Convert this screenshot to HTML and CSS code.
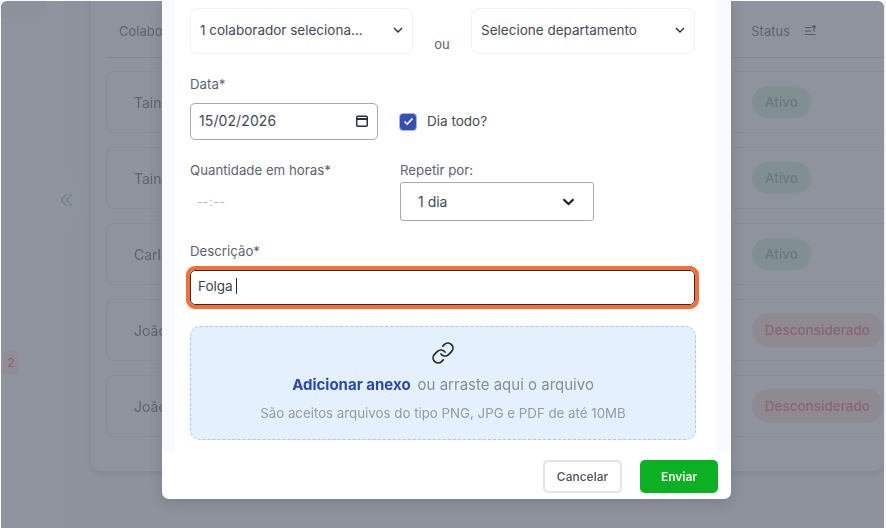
FILE: index.html
```html
<!DOCTYPE html>
<html lang="pt-BR">
<head>
    <meta charset="UTF-8">
    <meta name="viewport" content="width=device-width, initial-scale=1.0">
    <title>Nova folga</title>
    <link rel="stylesheet" href="styles.css">
</head>
<body>
    <div class="screen">
        <aside class="sidebar">
            <div class="sidebar-pill"></div>
            <div class="sidebar-badge">2</div>
            <svg class="sidebar-handle" width="20" height="100" viewBox="0 0 20 100">
                <path d="M0 0 C2 12 19 26 19 50 C19 74 2 88 0 100 Z" fill="#fbfcfd"/>
            </svg>
            <svg class="sidebar-chevrons" width="13" height="14" viewBox="0 0 13 14" fill="none" stroke="#8fd0b2" stroke-width="1">
                <path d="M6.5 1 L1 7 L6.5 13"/>
                <path d="M12 1 L6.5 7 L12 13"/>
            </svg>
        </aside>
        <main class="content">
            <section class="table-card">
                <div class="table-head">
                    <span class="head-name">Colaborador</span>
                    <span class="head-status">
                        Status
                        <svg width="14" height="14" viewBox="0 0 14 14" fill="none" stroke="#8a8e98" stroke-width="1.1">
                            <path d="M1 3.5 H7 M1 7 H7 M1 10.5 H11.5 M10 7.5 V1.5 M8 3.5 L10 1.5 L12 3.5"/>
                        </svg>
                    </span>
                </div>
                <div class="table-row">
                    <span class="row-name">Tainá</span>
                    <span class="pill pill-green">Ativo</span>
                </div>
                <div class="table-row">
                    <span class="row-name">Tainá</span>
                    <span class="pill pill-green">Ativo</span>
                </div>
                <div class="table-row">
                    <span class="row-name">Carla</span>
                    <span class="pill pill-green">Ativo</span>
                </div>
                <div class="table-row">
                    <span class="row-name">João</span>
                    <span class="pill pill-red">Desconsiderado</span>
                </div>
                <div class="table-row">
                    <span class="row-name">João</span>
                    <span class="pill pill-red">Desconsiderado</span>
                </div>
            </section>
        </main>
    </div>

    <div class="overlay"></div>

    <div class="modal">
        <div class="modal-body">
            <div class="form">
                <div class="select-row">
                    <div class="soft-select select-first">
                        <span>1 colaborador seleciona...</span>
                        <svg width="10" height="6" viewBox="0 0 10 6" fill="none" stroke="#2b2f38" stroke-width="1.4"><path d="M1 1 L5 5 L9 1"/></svg>
                    </div>
                    <span class="or-text">ou</span>
                    <div class="soft-select">
                        <span>Selecione departamento</span>
                        <svg width="10" height="6" viewBox="0 0 10 6" fill="none" stroke="#2b2f38" stroke-width="1.4"><path d="M1 1 L5 5 L9 1"/></svg>
                    </div>
                </div>

                <label class="label label-date">Data*</label>
                <div class="date-row">
                    <div class="date-input">
                        <span>15/02/2026</span>
                        <svg width="14" height="14" viewBox="0 0 14 14" fill="none" stroke="#2b2f38" stroke-width="1.5">
                            <rect x="1.75" y="2.25" width="10.5" height="10" rx="1"/>
                            <path d="M1.75 5 H12.25" stroke-width="2"/>
                        </svg>
                    </div>
                    <div class="checkbox">
                        <svg width="11" height="9" viewBox="0 0 11 9" fill="none" stroke="#fff" stroke-width="1.7"><path d="M1.5 4.5 L4.2 7 L9.5 1.5"/></svg>
                    </div>
                    <span class="check-text">Dia todo?</span>
                </div>

                <div class="hours-row">
                    <div class="hours-col">
                        <label class="label">Quantidade em horas*</label>
                        <span class="time-empty">--:--</span>
                    </div>
                    <div class="repeat-col">
                        <label class="label label-repeat">Repetir por:</label>
                        <div class="repeat-select">
                            <span>1 dia</span>
                            <svg width="13" height="8" viewBox="0 0 13 8" fill="none" stroke="#1c1f26" stroke-width="2.2"><path d="M1.5 1.2 L6.5 6 L11.5 1.2"/></svg>
                        </div>
                    </div>
                </div>

                <label class="label label-desc">Descrição*</label>
                <div class="text-input">Folga<span class="caret"></span></div>

                <div class="dropzone">
                    <svg class="link-icon" width="24" height="24" viewBox="0 0 24 24" fill="none" stroke="#23262e" stroke-width="1.7" stroke-linecap="round" stroke-linejoin="round">
                        <path d="M10 13a5 5 0 0 0 7.54.54l3-3a5 5 0 0 0-7.07-7.07l-1.72 1.71"/>
                        <path d="M14 11a5 5 0 0 0-7.54-.54l-3 3a5 5 0 0 0 7.07 7.07l1.71-1.71"/>
                    </svg>
                    <p class="drop-title"><strong>Adicionar anexo</strong><span>ou arraste aqui o arquivo</span></p>
                    <p class="drop-hint">São aceitos arquivos do tipo PNG, JPG e PDF de até 10MB</p>
                </div>
            </div>
        </div>
        <div class="modal-footer">
            <button class="btn btn-cancel">Cancelar</button>
            <button class="btn btn-send">Enviar</button>
        </div>
    </div>
</body>
</html>
```

FILE: styles.css
```css
* {
    box-sizing: border-box;
}

html, body {
    margin: 0;
    height: 100%;
    overflow: hidden;
}

body {
    background-color: #fff;
    font-family: Inter, "Liberation Sans", sans-serif;
    color: #3d4250;
}

.screen {
    display: flex;
    height: 528px;
    background-color: #fafbfd;
    filter: blur(0.5px);
}

/* sidebar behind the dialog */
.sidebar {
    position: relative;
    width: 63px;
    flex-shrink: 0;
    background-color: #fbfcfd;
}

.sidebar-pill {
    width: 45px;
    height: 17px;
    background-color: #f6f7f9;
    border-radius: 0 0 8px 0;
}

.sidebar-badge {
    position: absolute;
    left: 3px;
    top: 351px;
    width: 16px;
    height: 24px;
    border-radius: 5px;
    background-color: #fff0f0;
    color: #fb9c9c;
    font-size: 12px;
    line-height: 24px;
    text-align: center;
}

.sidebar-handle {
    position: absolute;
    left: 63px;
    top: 150px;
}

.sidebar-chevrons {
    position: absolute;
    left: 60px;
    top: 193px;
}

.content {
    flex: 1;
    padding-left: 28px;
    padding-right: 2px;
    background-color: #f8f9fb;
}

.table-card {
    height: 471px;
    padding: 0 0 0 15px;
    background-color: #fafbfd;
    border-radius: 0 0 10px 10px;
    box-shadow: 0 2px 6px rgba(30, 35, 50, 0.1);
}

.table-head {
    display: flex;
    align-items: center;
    height: 58px;
    margin-bottom: 13px;
    padding-top: 4px;
    border-bottom: 1px solid #e6e8ec;
    font-size: 13px;
    color: #a3a5ab;
}

.head-name {
    padding-left: 13px;
}

.head-status {
    display: flex;
    align-items: center;
    gap: 14px;
    margin-left: auto;
    margin-right: 66px;
}

.table-row {
    display: flex;
    align-items: center;
    justify-content: space-between;
    height: 62px;
    margin-bottom: 14px;
    padding-left: 27px;
    border: 1px solid #eef0f3;
    border-right: none;
    border-radius: 8px 0 0 8px;
    font-size: 14px;
    color: #a3a5ab;
}

.pill {
    padding: 0 13px;
    border-radius: 17px;
    font-size: 13.5px;
    font-weight: 500;
}

.pill-green {
    height: 32px;
    line-height: 32px;
    margin-right: 73px;
    background-color: #e2f4ec;
    color: #b2cdc1;
}

.pill-red {
    height: 34px;
    line-height: 34px;
    margin-right: 1px;
    background-color: #fbe9ea;
    color: #efa8ad;
}

.overlay {
    position: fixed;
    inset: 1px 2px 0 1px;
    background-color: rgba(12, 19, 40, 0.45);
    border-radius: 6px 6px 0 0;
}

/* dialog */
.modal {
    position: fixed;
    left: 162px;
    top: 0;
    width: 569px;
    height: 499px;
    background-color: #fff;
    border-radius: 0 0 7px 7px;
    box-shadow: 0 4px 14px rgba(20, 24, 36, 0.15);
    display: flex;
    flex-direction: column;
    filter: blur(0.45px);
}

.modal-body {
    height: 452px;
    padding: 0 14px 0 13px;
    background-color: #f9faff;
}

.form {
    height: 452px;
    padding: 8px 14px 0 15px;
    background-color: #fff;
}

.select-row {
    display: flex;
    align-items: flex-start;
}

.soft-select {
    display: flex;
    align-items: center;
    justify-content: space-between;
    width: 224px;
    height: 46px;
    padding: 0 9px 2px;
    border: 1px solid #eef0f3;
    border-radius: 8px;
    font-size: 13.5px;
    color: #444955;
}

.select-first {
    width: 223px;
}

.or-text {
    width: 58px;
    padding-top: 28px;
    font-size: 13px;
    color: #5d6270;
    text-align: center;
}

.label {
    display: block;
    font-size: 13.25px;
    line-height: 18px;
    color: #5d6270;
}

.label-date {
    margin-top: 21px;
}

.date-row {
    display: flex;
    align-items: center;
    margin-top: 10px;
}

.date-input {
    display: flex;
    align-items: center;
    justify-content: space-between;
    width: 188px;
    height: 37px;
    padding: 0 8px 2px 8px;
    border: 1px solid #a5a9b4;
    border-radius: 5px;
    font-size: 14px;
    letter-spacing: 0.1px;
    color: #444955;
}

.checkbox {
    display: flex;
    align-items: center;
    justify-content: center;
    width: 18px;
    height: 18px;
    margin: 0 0 0 21px;
    background-color: #3450b8;
    border: 1px solid #a9b4de;
    border-radius: 4px;
}

.check-text {
    margin: 0 0 2px 10px;
    font-size: 13.5px;
    color: #444955;
}

.hours-row {
    display: flex;
    margin-top: 21px;
}

.hours-col {
    width: 210px;
}

.time-empty {
    display: block;
    margin-top: 15px;
    padding-left: 7px;
    font-size: 12px;
    letter-spacing: 0.6px;
    color: #b5b8c0;
}

.label-repeat {
    margin-bottom: 3px;
}

.repeat-select {
    display: flex;
    align-items: center;
    justify-content: space-between;
    width: 194px;
    height: 39px;
    padding: 0 18px 0 17px;
    border: 1px solid #a5a9b4;
    border-radius: 3px;
    font-size: 14px;
    color: #444955;
}

.label-desc {
    margin-top: 21px;
}

.text-input {
    display: flex;
    align-items: center;
    width: 505px;
    height: 35px;
    margin-top: 10px;
    padding: 0 0 3px 7px;
    border: 1px solid #2a2d35;
    border-radius: 5px;
    outline: 4px solid #f76d35;
    outline-offset: 0;
    font-size: 13.5px;
    color: #3d4250;
}

.caret {
    width: 1px;
    height: 16px;
    margin-left: 3px;
    background-color: #2a2d35;
}

.dropzone {
    display: flex;
    flex-direction: column;
    align-items: center;
    width: 506px;
    height: 114px;
    margin-top: 21px;
    padding-top: 14px;
    background-color: #e4f0fd;
    border: 1px dashed #b4c1f8;
    border-radius: 10px;
}

.drop-title {
    margin: 11px 0 0;
    font-size: 15px;
    line-height: 18px;
}

.drop-title strong {
    color: #2a48b4;
    font-weight: 700;
}

.drop-title span {
    margin-left: 7px;
    color: #888c97;
}

.drop-hint {
    margin: 11px 0 0;
    font-size: 13.3px;
    line-height: 16px;
    color: #959aa5;
}

.modal-footer {
    display: flex;
    justify-content: flex-end;
    gap: 18px;
    padding: 8px 13px 0 0;
}

.btn {
    width: 79px;
    height: 33px;
    border-radius: 5px;
    font-family: inherit;
    font-size: 12px;
    font-weight: 500;
}

.btn-cancel {
    background-color: #fff;
    border: 2px solid #e2e4e8;
    color: #4a4f5c;
}

.btn-send {
    width: 78px;
    background-color: #0cb023;
    border: none;
    color: #fff;
    font-weight: 600;
}
```
